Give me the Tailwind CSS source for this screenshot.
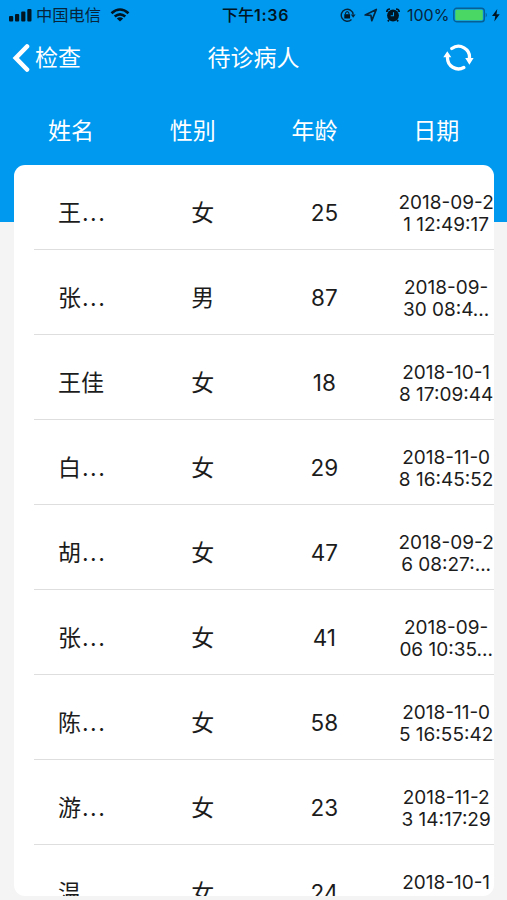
<!DOCTYPE html>
<html lang="zh-CN">
<head>
<meta charset="utf-8">
<title>待诊病人</title>
<script src="https://cdn.jsdelivr.net/npm/@tailwindcss/browser@4"></script>
</head>
<body class="w-[507px] h-[900px] overflow-hidden bg-[#f4f4f4] font-['Inter','Noto_Sans_CJK_SC',sans-serif] text-[#1c1c1c]">
<header class="h-[222px] bg-[#0099f0] text-white">
  <div class="h-[30px] flex items-center pl-[9px] pr-[5px] text-[#06253b]">
    <svg class="w-[23px] h-[14px] shrink-0" viewBox="0 0 23 14" fill="#001522"><rect x="0" y="8" width="4.200" height="5.500" rx="1"/><rect x="6" y="6" width="4.200" height="7.500" rx="1"/><rect x="12.200" y="3.500" width="4.200" height="10" rx="1"/><rect x="18.300" y="1" width="4.200" height="12.500" rx="1"/></svg>
    <span class="ml-[4px] w-[66px] text-[16.3px] leading-[30px] whitespace-nowrap">中国电信</span>
    <svg class="ml-[8px] w-[20px] h-[14px] shrink-0" viewBox="0 0 20 14" fill="none" stroke="#001522" stroke-width="2.600"><path d="M1.500 5.300Q10-2.300 18.500 5.300M4.700 8.600Q10 4 15.300 8.600"/><path d="M10 13.500L6.800 10.400Q10 8 13.200 10.400Z" fill="#001522" stroke="none"/></svg>
    <span class="ml-[92px] w-[70px] text-[16px] leading-[30px] whitespace-nowrap text-[#001522]"><span class="font-medium">下午</span><span class="font-semibold tracking-[0.7px]">1:36</span></span>
    <svg class="ml-[48px] w-[16px] h-[14px] shrink-0" viewBox="0 0 16 14" fill="none" stroke="#06253b" stroke-width="1.400"><path d="M11.500 11.500A6 6 0 1 1 13.200 6.500"/><path d="M10.800 6.500H15.600L13.200 9.700Z" fill="#06253b" stroke="none"/><rect x="4.300" y="6.200" width="5.800" height="4.300" fill="#001522" stroke="none"/><path d="M5.500 6.500V5Q7.200 2.300 8.900 5V6.500" stroke-width="1.100"/></svg>
    <svg class="ml-[8px] w-[14px] h-[14px] shrink-0" viewBox="0 0 14 14" fill="none" stroke="#06253b" stroke-width="1.700" stroke-linejoin="round"><path d="M1.200 7L12.300 1.500L7.800 12.600L6.900 7.300Z"/></svg>
    <svg class="ml-[8px] w-[14px] h-[14px] shrink-0" viewBox="0 0 14 14"><circle cx="7" cy="7.500" r="5.900" fill="#001522"/><path d="M.8 4Q1 1 4 1M10 1Q13 1 13.200 4M3 12L1.800 13.300M11 12L12.200 13.300" fill="none" stroke="#001522" stroke-width="1.700"/><path d="M7.500 4.200V7.800H4.700" fill="none" stroke="#0099f0" stroke-width="1.100"/></svg>
    <span class="ml-[7px] w-[42px] text-[16px] leading-[30px] whitespace-nowrap">100%</span>
    <svg class="ml-[4px] w-[35px] h-[16px] shrink-0" viewBox="0 0 35 16"><rect x=".8" y="1.300" width="30.500" height="13.400" rx="2.800" fill="none" stroke="#075f93" stroke-width="1.400"/><rect x="2.300" y="2.800" width="27.500" height="10.400" rx="1.300" fill="#4bd763"/><path d="M32.700 5.500Q35 8 32.700 10.500Z" fill="#075f93"/></svg>
    <svg class="ml-[4px] w-[8px] h-[13px] shrink-0" viewBox="0 0 8 13"><path d="M5.300 0L0 7H3.300L2.300 12.500L7.700 5.200H4.500Z" fill="#001522"/></svg>
  </div>
  <div class="h-[56px] grid grid-cols-3 items-center text-[23px] leading-[56px]">
    <div class="flex items-center pl-[12px] gap-[5px]">
      <svg class="w-[18px] h-[29px] shrink-0" viewBox="0 0 18 29" fill="none" stroke="#fff" stroke-width="4.600" stroke-linecap="round" stroke-linejoin="miter"><path d="M15 2.500L3.800 14L15 25.500"/></svg>
      <span>检查</span>
    </div>
    <div class="text-center">待诊病人</div>
    <div class="flex justify-end pr-[33px]">
      <svg class="w-[31px] h-[28px]" viewBox="0 0 31 28" fill="none" stroke="#fff" stroke-width="3.300" stroke-linecap="round"><path d="M4.500 13.500A11 11 0 0 0 20.800 23.500M8.800 4.500A11 11 0 0 1 26.300 15"/><path d="M.3 13.300L4.300 7.300L8.300 13.300ZM22.200 14H30.600L26.400 20.700Z" fill="#fff" stroke="none"/></svg>
    </div>
  </div>
  <div class="ml-[10px] w-[487px] h-[88px] pt-[1px] grid grid-cols-4 text-center text-[23px] leading-[88px]">
    <span>姓名</span><span>性别</span><span>年龄</span><span>日期</span>
  </div>
</header>
<main id="patients" class="relative -mt-[57px] ml-[14px] w-[480px] h-[731px] rounded-[11px] bg-white overflow-hidden"></main>
<script>
const patients = [
  ['王...','女','25','2018-09-2','1 12:49:17'],
  ['张...','男','87','2018-09-','30 08:4...'],
  ['王佳','女','18','2018-10-1','8 17:09:44'],
  ['白...','女','29','2018-11-0','8 16:45:52'],
  ['胡...','女','47','2018-09-2','6 08:27:...'],
  ['张...','女','41','2018-09-','06 10:35...'],
  ['陈...','女','58','2018-11-0','5 16:55:42'],
  ['游...','女','23','2018-11-2','3 14:17:29'],
  ['温...','女','24','2018-10-1','']
];
document.getElementById('patients').innerHTML = patients.map(([name, sex, age, day, time]) => `
  <div class="ml-[20px] h-[85px] border-b border-[#dedede] flex items-start">
    <div class="grid grid-cols-4 w-[487px] shrink-0 h-[84px] pt-[12px] text-center text-[23px] leading-[73px] whitespace-nowrap">
      <div class="-ml-[28px] flex justify-center"><div class="w-[46px] text-left">${name.replace('...', '<span class="pl-[1px] tracking-[1.600px]">...</span>')}</div></div>
      <div class="-ml-[28px]">${sex}</div>
      <div class="-ml-[28px] text-[22.500px] leading-[71px]">${age}</div>
      <div class="-ml-[28px] pt-[15px] text-[19px] leading-[22px] flex flex-col items-center"><span>${day}</span><span>${time}</span></div>
    </div>
  </div>`).join('');
</script>
</body>
</html>
